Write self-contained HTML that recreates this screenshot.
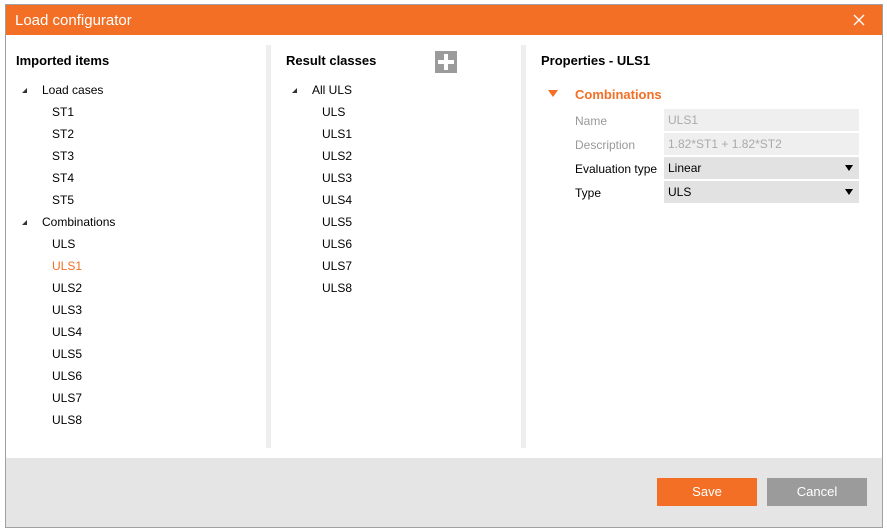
<!DOCTYPE html>
<html><head><style>
body{margin:0;width:887px;height:532px;background:#fff;font-family:"Liberation Sans",sans-serif;position:relative;overflow:hidden}
.win{position:absolute;left:5px;top:4px;width:876px;height:522px;border:1px solid #a0a0a0;background:#fff}
.title{position:absolute;left:0;top:0;width:876px;height:30px;background:#f26f25;color:#fff;font-size:15px;line-height:32px;padding-left:9px;box-sizing:border-box}
.a{position:absolute;font-size:12px;color:#000;white-space:nowrap}
.h{font-weight:bold;font-size:13px}
.sp{position:absolute;top:40px;width:5px;height:403px;background:#eeeeee}
.tri{position:absolute;width:0;height:0;border-left:5px solid transparent;border-bottom:5px solid #333}
.foot{position:absolute;left:0;top:453px;width:876px;height:69px;background:#e5e5e5}
.btn{position:absolute;top:20px;width:100px;height:28px;color:#fff;font-size:13px;text-align:center;line-height:28px}
.box{position:absolute;left:664px;width:195px;height:22px;font-size:12px;line-height:22px;padding-left:4px;box-sizing:border-box}
.dd{position:absolute;right:6px;top:8px;border-left:4px solid transparent;border-right:4px solid transparent;border-top:6px solid #000}
</style></head><body>
<div class="win">
<div class="title">Load configurator</div>
<svg style="position:absolute;left:847px;top:9px" width="12" height="12"><path d="M1 1L11 11M11 1L1 11" stroke="#fff" stroke-width="1.3"/></svg>
<div class="sp" style="left:260px"></div>
<div class="sp" style="left:515px"></div>
<div class="foot">
<div class="btn" style="left:651px;background:#f26f25">Save</div>
<div class="btn" style="left:761px;background:#9b9b9b">Cancel</div>
</div>
</div>
<div class="a h" style="left:16px;top:53px">Imported items</div>
<div class="tri" style="left:22px;top:88px"></div>
<div class="a" style="left:42px;top:83px">Load cases</div>
<div class="a" style="left:52px;top:105px">ST1</div>
<div class="a" style="left:52px;top:127px">ST2</div>
<div class="a" style="left:52px;top:149px">ST3</div>
<div class="a" style="left:52px;top:171px">ST4</div>
<div class="a" style="left:52px;top:193px">ST5</div>
<div class="tri" style="left:22px;top:220px"></div>
<div class="a" style="left:42px;top:215px">Combinations</div>
<div class="a" style="left:52px;top:237px">ULS</div>
<div class="a" style="left:52px;top:259px;color:#f26f25">ULS1</div>
<div class="a" style="left:52px;top:281px">ULS2</div>
<div class="a" style="left:52px;top:303px">ULS3</div>
<div class="a" style="left:52px;top:325px">ULS4</div>
<div class="a" style="left:52px;top:347px">ULS5</div>
<div class="a" style="left:52px;top:369px">ULS6</div>
<div class="a" style="left:52px;top:391px">ULS7</div>
<div class="a" style="left:52px;top:413px">ULS8</div>

<div class="a h" style="left:286px;top:53px">Result classes</div>
<div style="position:absolute;left:435px;top:51px;width:22px;height:22px;background:#9b9b9b">
<div style="position:absolute;left:9px;top:3px;width:4px;height:16px;background:#fff"></div>
<div style="position:absolute;left:3px;top:9px;width:16px;height:4px;background:#fff"></div></div>
<div class="tri" style="left:292px;top:88px"></div>
<div class="a" style="left:312px;top:83px">All ULS</div>
<div class="a" style="left:322px;top:105px">ULS</div>
<div class="a" style="left:322px;top:127px">ULS1</div>
<div class="a" style="left:322px;top:149px">ULS2</div>
<div class="a" style="left:322px;top:171px">ULS3</div>
<div class="a" style="left:322px;top:193px">ULS4</div>
<div class="a" style="left:322px;top:215px">ULS5</div>
<div class="a" style="left:322px;top:237px">ULS6</div>
<div class="a" style="left:322px;top:259px">ULS7</div>
<div class="a" style="left:322px;top:281px">ULS8</div>

<div class="a h" style="left:541px;top:53px">Properties - ULS1</div>
<div style="position:absolute;left:548px;top:90px;border-left:5px solid transparent;border-right:5px solid transparent;border-top:7px solid #f26f25"></div>
<div class="a h" style="left:575px;top:87px;color:#f26f25">Combinations</div>
<div class="a" style="left:575px;top:114px;color:#999">Name</div>
<div class="box" style="top:109px;background:#efefef;color:#aaa">ULS1</div>
<div class="a" style="left:575px;top:138px;color:#999">Description</div>
<div class="box" style="top:133px;background:#efefef;color:#aaa">1.82*ST1 + 1.82*ST2</div>
<div class="a" style="left:575px;top:162px">Evaluation type</div>
<div class="box" style="top:157px;background:#e2e2e2">Linear<span class="dd"></span></div>
<div class="a" style="left:575px;top:186px">Type</div>
<div class="box" style="top:181px;background:#e2e2e2">ULS<span class="dd"></span></div>
</body></html>
